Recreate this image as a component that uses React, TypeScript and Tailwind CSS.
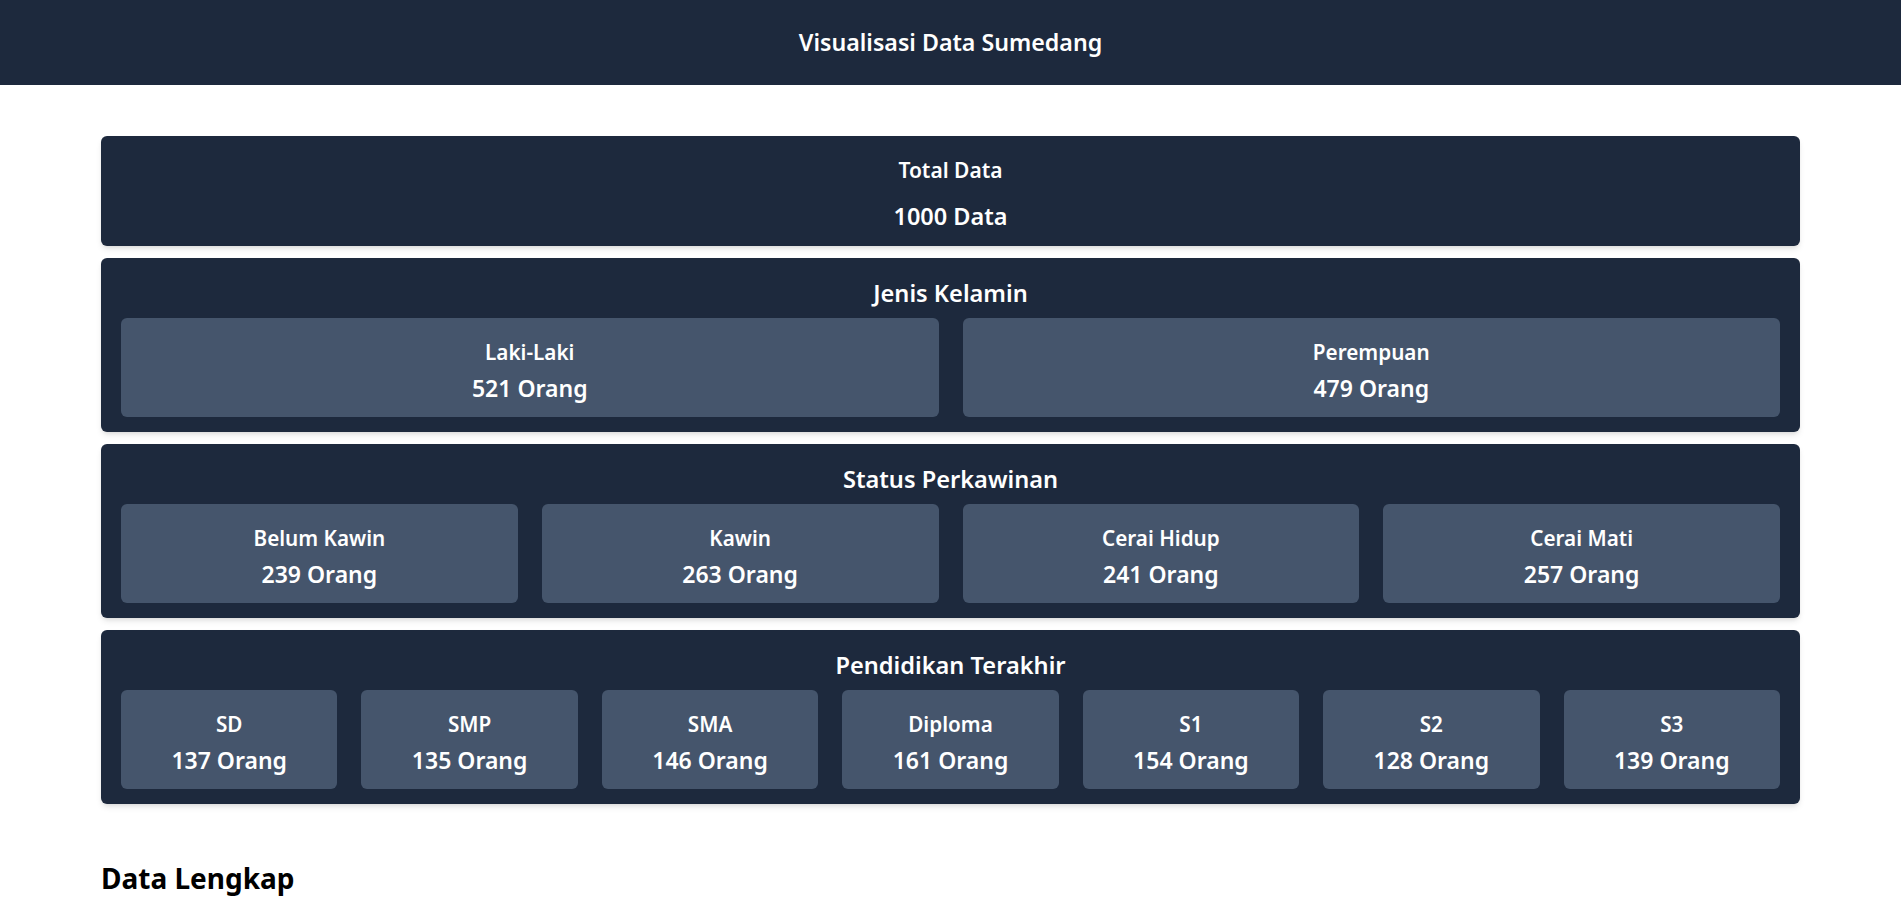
import React from "react";

type Stat = { label: string; count: number };

const jenisKelamin: Stat[] = [
  { label: "Laki-Laki", count: 521 },
  { label: "Perempuan", count: 479 },
];

const statusPerkawinan: Stat[] = [
  { label: "Belum Kawin", count: 239 },
  { label: "Kawin", count: 263 },
  { label: "Cerai Hidup", count: 241 },
  { label: "Cerai Mati", count: 257 },
];

const pendidikan: Stat[] = [
  { label: "SD", count: 137 },
  { label: "SMP", count: 135 },
  { label: "SMA", count: 146 },
  { label: "Diploma", count: 161 },
  { label: "S1", count: 154 },
  { label: "S2", count: 128 },
  { label: "S3", count: 139 },
];

function StatBox({ label, count }: Stat) {
  return (
    <div className="bg-slate-600 rounded-[6px] pt-[20px] pb-[13px] flex flex-col items-center">
      <span className="text-[20.7px] leading-[28px] font-semibold">{label}</span>
      <span className="mt-[6px] text-[23px] leading-[32px] font-semibold">{count} Orang</span>
    </div>
  );
}

interface GroupCardProps {
  title: string;
  items: Stat[];
  cols: string;
}

function GroupCard({ title, items, cols }: GroupCardProps) {
  return (
    <div className="bg-slate-800 rounded-[6px] shadow-md text-white px-[20px] pt-[20px] pb-[15px]">
      <h3 className="text-center text-[23.6px] leading-[30px] font-semibold">{title}</h3>
      <div className={`mt-[10px] grid gap-[24px] ${cols}`}>
        {items.map((item) => (
          <StatBox key={item.label} label={item.label} count={item.count} />
        ))}
      </div>
    </div>
  );
}

export default function App() {
  return (
    <div className="min-h-screen bg-white font-['Noto_Sans',sans-serif]">
      {/* Top bar */}
      <header className="h-[85px] bg-slate-800 flex items-center justify-center">
        <h1 className="text-white text-[23.2px] font-semibold">Visualisasi Data Sumedang</h1>
      </header>

      <main className="px-[101px] pt-[51px]">
        <div className="flex flex-col gap-[12px]">
          {/* Total */}
          <div className="bg-slate-800 rounded-[6px] shadow-md text-white flex flex-col items-center pt-[19px] pb-[13px]">
            <span className="text-[21px] leading-[30px] font-semibold">Total Data</span>
            <span className="mt-[14px] text-[23.5px] leading-[34px] font-semibold">1000 Data</span>
          </div>

          <GroupCard title="Jenis Kelamin" items={jenisKelamin} cols="grid-cols-2" />
          <GroupCard title="Status Perkawinan" items={statusPerkawinan} cols="grid-cols-4" />
          <GroupCard title="Pendidikan Terakhir" items={pendidikan} cols="grid-cols-7" />
        </div>

        <h2 className="mt-[56px] text-[28px] leading-[36px] font-bold text-black">Data Lengkap</h2>
      </main>
    </div>
  );
}
